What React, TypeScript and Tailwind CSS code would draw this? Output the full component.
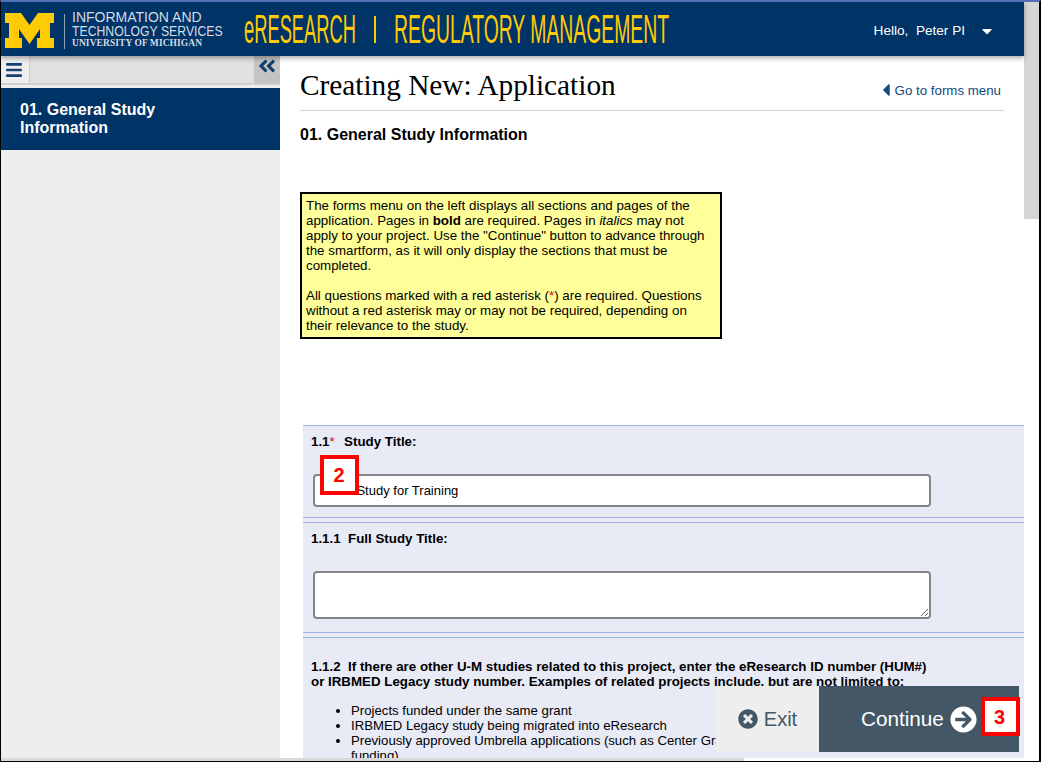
import React from "react";
import { FaTimesCircle, FaArrowCircleRight, FaBars, FaAngleDoubleLeft, FaCaretLeft, FaCaretDown } from "react-icons/fa";

const sans = "font-['Liberation_Sans',Arial,sans-serif]";

function Wide({ children, className }: { children: React.ReactNode; className: string }) {
  return <span className={`inline-block origin-left whitespace-nowrap ${className}`}>{children}</span>;
}

export default function App() {
  return (
    <div className={`relative flex h-[762px] w-[1041px] flex-col overflow-hidden border-t-[2px] border-r-[2px] border-b border-l border-t-[#5470b5] border-r-black border-b-black border-l-black bg-white text-black ${sans}`}>
      <div className="flex min-h-0 flex-1">
        <div className="flex min-w-0 flex-1 flex-col">
          <header className="relative z-10 flex h-[54px] shrink-0 items-center bg-[#003366] shadow-[0_2px_5px_rgba(0,0,0,0.35)]">
            <svg width="50" height="36" viewBox="0 0 50 36" className="ml-[4px] mt-[4px] shrink-0">
              <polygon fill="#ffcb05" points="0,0 16,0 24.5,12 33,0 49,0 49,10 45,10 45,25 49,25 49,35 32,35 32,25 35,25 35,16 24.5,31 14,16 14,25 17,25 17,35 0,35 0,25 4,25 4,10 0,10" />
            </svg>
            <div className="ml-[9px] mt-[4px] h-[35px] w-px shrink-0 bg-[#8fa3b8]" />
            <div className="ml-[7px] mt-[1px] flex w-[160px] shrink-0 flex-col text-[#d4dbe4]">
              <span className="whitespace-nowrap text-[14px] leading-[13.5px]">INFORMATION AND</span>
              <Wide className="scale-x-[0.875] text-[14px] leading-[13.5px]">TECHNOLOGY SERVICES</Wide>
              <span className="whitespace-nowrap font-['Liberation_Serif',serif] text-[9.5px] font-bold leading-[10px] tracking-[0.07px]">UNIVERSITY OF MICHIGAN</span>
            </div>
            <div className="ml-[12px] flex h-full w-[430px] shrink-0 items-center text-[#ffcb05]">
              <Wide className="w-[112px] scale-x-[0.458] text-[40px] leading-none">eRESEARCH</Wide>
              <span className="ml-[18px] mt-[1px] h-[27px] w-[2px] shrink-0 bg-[#ffcb05]" />
              <Wide className="ml-[18px] w-[276px] scale-x-[0.484] text-[40px] leading-none">REGULATORY MANAGEMENT</Wide>
            </div>
            <div className="ml-auto mt-[5px] flex items-center pr-[29px] text-[13.6px] font-normal text-white">
              <span className="whitespace-pre">Hello,  Peter PI</span>
              <FaCaretDown className="ml-[14px] text-[16px]" />
            </div>
          </header>

          <div className="flex min-h-0 flex-1">
            <aside className="flex w-[279px] shrink-0 flex-col bg-[#eeeeee]">
              <div className="flex h-[29px] shrink-0 border-b-[2px] border-[#cfcfcf] bg-[#cfcfcf]">
                <div className="flex w-[28px] items-center bg-[#eeeeee] pl-[4px] text-[#13406f]"><FaBars className="text-[18px]" /></div>
                <div className="ml-[1px] flex-1 bg-[#e0e0e0]" />
                <div className="flex w-[26px] items-start justify-center bg-[#c4c4c4] text-[#13406f]"><FaAngleDoubleLeft className="text-[20px]" /></div>
              </div>
              <div className="mt-[3px] flex h-[62px] shrink-0 items-center bg-[#003366] pl-[19px] pr-6 text-[16px] font-bold leading-[18px] text-white">
                <span className="w-[170px]">01. General Study Information</span>
              </div>
            </aside>

            <main className="min-w-0 flex-1 overflow-hidden">
              <div className="mx-[20px] flex h-[55px] items-end justify-between border-b border-[#d5d5d5] pb-[8px]">
                <h1 className="mb-[1px] font-['Liberation_Serif',serif] text-[29.3px] font-normal leading-[32px]">Creating New: Application</h1>
                <a className="mb-[2px] mr-[3px] flex items-center text-[13.3px] leading-[15px] text-[#104a82]"><FaCaretLeft className="-mr-[1.5px] text-[20px]" />Go to forms menu</a>
              </div>
              <h2 className="ml-[20px] mt-[15px] text-[16px] font-bold leading-[18px]">01. General Study Information</h2>

              <div className="ml-[20px] mt-[48px] h-[147px] w-[422px] border-[2px] border-black bg-[#ffff99] pb-[4px] pl-[4px] pr-[12px] pt-[4px] text-[13.33px] leading-[15px]">
                The forms menu on the left displays all sections and pages of the application. Pages in <b>bold</b> are required. Pages in <i>italics</i> may not apply to your project. Use the "Continue" button to advance through the smartform, as it will only display the sections that must be completed.
                <br />
                <br />
                All questions marked with a red asterisk (<span className="text-[#e00000]">*</span>) are required. Questions without a red asterisk may or may not be required, depending on their relevance to the study.
              </div>

              <div className="ml-[23px] mt-[86px] flex flex-col gap-[4px] bg-[#e8eaf6] text-[13.33px] leading-[15px]">
                <section className="h-[93px] border-y border-[#9fb4e0] pl-[10px] pt-[8px]">
                  <div className="-ml-[2px] font-bold whitespace-pre">1.1<span className="mr-[2px] font-normal text-[#e00000]">*</span>  Study Title:</div>
                  <input readOnly value="Test Study for Training" className="mt-[25px] block h-[33px] w-[618px] rounded-[4px] border-[2px] border-[#858585] bg-white pl-[14px] text-[13px] text-black" />
                </section>
                <section className="h-[111px] border-y border-[#9fb4e0] pl-[10px] pt-[8px]">
                  <div className="-ml-[2px] font-bold whitespace-pre">1.1.1  Full Study Title:</div>
                  <textarea readOnly className="mt-[25px] block h-[48px] w-[618px] rounded-[4px] border-[2px] border-[#858585] bg-white" />
                </section>
                <section className="border-t border-[#9fb4e0] pl-[8px] pt-[21px]">
                  <div className="w-[640px] font-bold whitespace-pre">1.1.2  If there are other U-M studies related to this project, enter the eResearch ID number (HUM#){"\n"}or IRBMED Legacy study number. Examples of related projects include. but are not limited to:</div>
                  <ul className="ml-[40px] mt-[14px] list-disc text-[13.2px]">
                    <li>Projects funded under the same grant</li>
                    <li>IRBMED Legacy study being migrated into eResearch</li>
                    <li className="whitespace-pre">Previously approved Umbrella applications (such as Center Grants){"\n"}funding)</li>
                  </ul>
                </section>
              </div>
            </main>
          </div>
        </div>
        <div className="w-[15px] shrink-0 bg-white">
          <div className="h-[217px] bg-[#d6d6d6]" />
        </div>
      </div>
      <div className="h-[3px] shrink-0 bg-white"><div className="h-full w-[743px] bg-[#d9d9d9]" /></div>

      <div className="absolute left-[715px] top-[684px] flex h-[66px] w-[303px]">
        <div className="flex w-[103px] items-center justify-center gap-[6px] bg-[#eeeeee] text-[20px] text-[#435767]"><FaTimesCircle className="text-[20px]" />Exit</div>
        <div className="flex w-[200px] items-center bg-[#435767] pl-[42px] text-[20.7px] text-white">Continue<FaArrowCircleRight className="ml-[6px] text-[27px]" /></div>
      </div>

      <div className="absolute left-[319px] top-[453px] flex h-[40px] w-[39px] items-center justify-center border-[4px] border-[#ff0000] bg-white pr-[1px] text-[20px] font-bold text-[#ff0000]">2</div>
      <div className="absolute left-[980px] top-[695px] flex h-[39px] w-[39px] items-center justify-center border-[4px] border-[#ff0000] bg-white pr-[2px] text-[20px] font-bold text-[#ff0000]">3</div>
    </div>
  );
}
